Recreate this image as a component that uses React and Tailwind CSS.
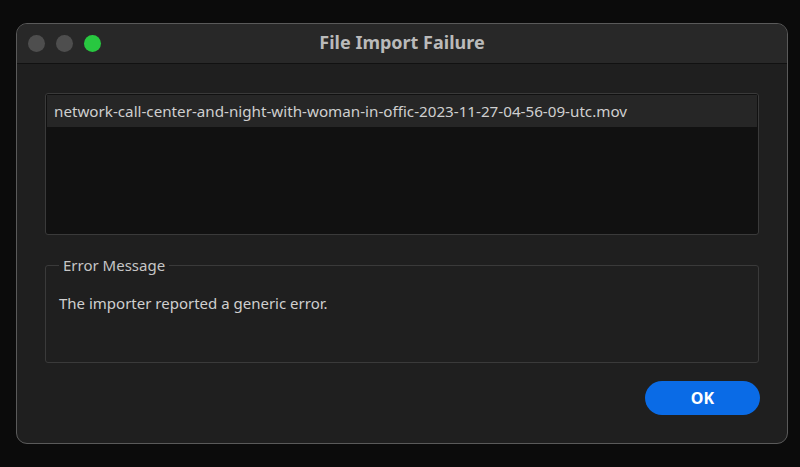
import React from 'react';

const fileName = 'network-call-center-and-night-with-woman-in-offic-2023-11-27-04-56-09-utc.mov';

export default function App() {
  return (
    <div className="w-[800px] h-[467px] bg-[#0b0b0b] pt-[23px] pl-[16px] font-['Noto_Sans',sans-serif]">
      <div className="w-[772px] h-[421px] rounded-[11px] border border-[#5a5a5a] bg-[#1f1f1f] overflow-hidden flex flex-col">
        {/* Barra de título */}
        <div className="relative h-[40px] shrink-0 bg-[#282828] border-b border-[#111] flex items-center">
          <div className="flex items-center gap-[11px] pl-[11px]">
            <span className="w-[17px] h-[17px] rounded-full bg-[#4e4e4e]" />
            <span className="w-[17px] h-[17px] rounded-full bg-[#4e4e4e]" />
            <span className="w-[17px] h-[17px] rounded-full bg-[#28c840]" />
          </div>
          <div className="absolute inset-0 flex items-center justify-center pb-[2px] text-[18px] font-bold text-[#bababa]">
            File Import Failure
          </div>
        </div>

        {/* Contenido */}
        <div className="flex flex-col px-[28px] pt-[29px]">
          <div className="h-[142px] rounded-[3px] border border-[#3a3a3a] bg-[#111111] p-px">
            <div className="h-[32px] bg-[#262626] flex items-center pl-[7px] text-[15.2px] text-[#cfcfcf]">
              {fileName}
            </div>
          </div>

          <fieldset className="mt-[20px] h-[108px] rounded-[3px] border border-[#3a3a3a] pl-[13px] pr-[13px]">
            <legend className="px-[4px] text-[15px] text-[#c6c6c6] leading-[20px]">Error Message</legend>
            <p className="mt-[17px] text-[15px] text-[#cfcfcf]">The importer reported a generic error.</p>
          </fieldset>

          <div className="flex justify-end mt-[18px]">
            <button className="w-[115px] h-[34px] mr-[-1px] rounded-full bg-[#0a6be6] text-white font-bold text-[16px]">
              OK
            </button>
          </div>
        </div>
      </div>
    </div>
  );
}
